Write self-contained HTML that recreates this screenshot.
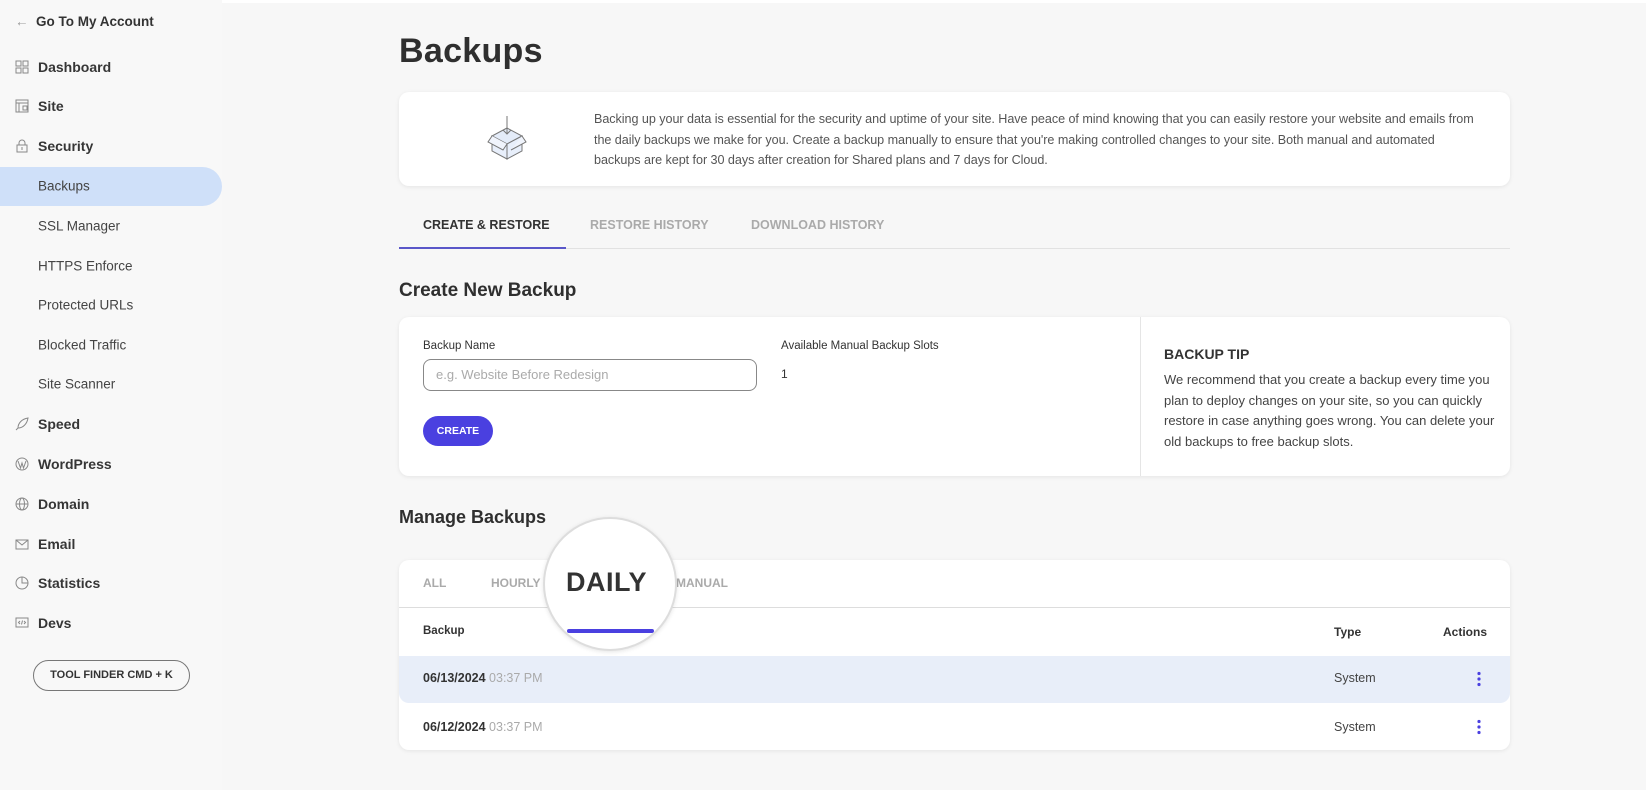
<!DOCTYPE html>
<html><head><meta charset="utf-8"><style>
*{margin:0;padding:0;box-sizing:border-box}
body{width:1646px;height:790px;background:#f7f7f7;font-family:"Liberation Sans",sans-serif;color:#333;position:relative;overflow:hidden}
.a{position:absolute;white-space:nowrap}
.side{position:absolute;left:0;top:0;width:222px;height:790px;background:#f8f8f8}
.ni{position:absolute;left:38px;font-size:14px;font-weight:bold;color:#363636;transform:translateY(-50%)}
.sub{position:absolute;left:38px;font-size:13.5px;color:#444;transform:translateY(-50%)}
.ic{position:absolute;left:15px;width:14px;height:14px;transform:translateY(-50%)}
.card{position:absolute;background:#fff;border-radius:10px;box-shadow:0 1px 4px rgba(0,0,0,.08)}
.g{font-size:13px;color:#555;line-height:20.5px}
</style></head><body>
<div class="side"></div>
<div class="a" style="left:15px;top:14px;font-size:13.5px;font-weight:bold;color:#333"><span style="color:#999;font-weight:normal">←</span>&nbsp; Go To My Account</div>
<svg class="ic" style="top:67px" viewBox="0 0 14 14" fill="none" stroke="#888"><rect x="1" y="1" width="5" height="5"/><rect x="8" y="1" width="5" height="5"/><rect x="1" y="8" width="5" height="5"/><rect x="8" y="8" width="5" height="5"/></svg>
<div class="ni" style="top:67px">Dashboard</div>
<svg class="ic" style="top:106px" viewBox="0 0 14 14" fill="none" stroke="#888"><rect x="1" y="1" width="12" height="12"/><path d="M1 4h12M4 4v9M8 7h4v4H8z"/></svg>
<div class="ni" style="top:106px">Site</div>
<svg class="ic" style="top:146px" viewBox="0 0 14 14" fill="none" stroke="#888"><rect x="2" y="6" width="10" height="7"/><path d="M4 6V4a3 3 0 0 1 6 0v2M7 8v3"/></svg>
<div class="ni" style="top:146px">Security</div>
<div class="a" style="left:0;top:167px;width:222px;height:39px;background:#cfe0f9;border-radius:0 20px 20px 0"></div>
<div class="sub" style="top:186px">Backups</div>
<div class="sub" style="top:226px">SSL Manager</div>
<div class="sub" style="top:266px">HTTPS Enforce</div>
<div class="sub" style="top:305px">Protected URLs</div>
<div class="sub" style="top:345px">Blocked Traffic</div>
<div class="sub" style="top:384px">Site Scanner</div>
<svg class="ic" style="top:424px" viewBox="0 0 14 14" fill="none" stroke="#888"><path d="M3 11c0-5 4-9 10-10-1 6-5 10-10 10zM3 11l-2 2"/></svg>
<div class="ni" style="top:424px">Speed</div>
<svg class="ic" style="top:464px" viewBox="0 0 14 14" fill="none" stroke="#888"><circle cx="7" cy="7" r="6"/><path d="M3 4l2.5 7L7 6l1.5 5L11 4"/></svg>
<div class="ni" style="top:464px">WordPress</div>
<svg class="ic" style="top:504px" viewBox="0 0 14 14" fill="none" stroke="#888"><circle cx="7" cy="7" r="6"/><ellipse cx="7" cy="7" rx="2.5" ry="6"/><path d="M1 7h12"/></svg>
<div class="ni" style="top:504px">Domain</div>
<svg class="ic" style="top:544px" viewBox="0 0 14 14" fill="none" stroke="#888"><rect x="1" y="3" width="12" height="9"/><path d="M1 3l6 5 6-5"/></svg>
<div class="ni" style="top:544px">Email</div>
<svg class="ic" style="top:583px" viewBox="0 0 14 14" fill="none" stroke="#888"><circle cx="7" cy="7" r="6"/><path d="M7 1v6h6"/></svg>
<div class="ni" style="top:583px">Statistics</div>
<svg class="ic" style="top:623px" viewBox="0 0 14 14" fill="none" stroke="#888"><rect x="1" y="2" width="12" height="9"/><path d="M5 5L3.5 6.5 5 8M9 5l1.5 1.5L9 8M7.5 4.5l-1 4"/></svg>
<div class="ni" style="top:623px">Devs</div>
<div class="a" style="left:33px;top:660px;width:157px;height:31px;border:1.5px solid #777;border-radius:16px;font-size:11px;font-weight:bold;color:#333;text-align:center;line-height:28px">TOOL FINDER CMD + K</div>

<div class="a" style="left:222px;top:0;width:1424px;height:3px;background:#fff"></div>
<div class="a" style="left:399px;top:32px;font-size:34px;font-weight:bold;color:#2f2f2f;letter-spacing:0.3px">Backups</div>

<div class="card" style="left:399px;top:92px;width:1111px;height:94px"></div>
<svg class="a" style="left:482px;top:114px" width="50" height="50" viewBox="0 0 50 50" fill="none" stroke="#777" stroke-width="1"><path d="M10 22l15-8 15 8-15 8z" fill="#e4ecf9"/><path d="M10 22v15l15 8V30zM40 22v15l-15 8V30z" fill="#e8effb"/><path d="M10 22l-4 6 15 8 4-6M40 22l4 6-15 8" fill="#f0f4fc"/><path d="M25 2v18M21 16l4 4 4-4"/></svg>
<div class="a g" style="left:594px;top:109px;font-size:12.6px;letter-spacing:-0.05px">Backing up your data is essential for the security and uptime of your site. Have peace of mind knowing that you can easily restore your website and emails from<br>the daily backups we make for you. Create a backup manually to ensure that you're making controlled changes to your site. Both manual and automated<br>backups are kept for 30 days after creation for Shared plans and 7 days for Cloud.</div>

<div class="a" style="left:423px;top:218px;font-size:12.5px;font-weight:bold;color:#333">CREATE &amp; RESTORE</div>
<div class="a" style="left:590px;top:218px;font-size:12.5px;font-weight:bold;color:#aaa">RESTORE HISTORY</div>
<div class="a" style="left:751px;top:218px;font-size:12.5px;font-weight:bold;color:#aaa">DOWNLOAD HISTORY</div>
<div class="a" style="left:399px;top:248px;width:1111px;height:1px;background:#e2e2e2"></div>
<div class="a" style="left:399px;top:247px;width:167px;height:2px;background:#5a57c9"></div>

<div class="a" style="left:399px;top:280px;font-size:19px;font-weight:bold;color:#2f2f2f">Create New Backup</div>
<div class="card" style="left:399px;top:317px;width:1111px;height:159px"></div>
<div class="a" style="left:1140px;top:317px;width:1px;height:159px;background:#e5e5e5"></div>
<div class="a" style="left:423px;top:340px;font-size:11.5px;color:#333">Backup Name</div>
<div class="a" style="left:423px;top:359px;width:334px;height:32px;border:1px solid #888;border-radius:8px;font-size:13px;color:#aaa;line-height:30px;padding-left:12px">e.g. Website Before Redesign</div>
<div class="a" style="left:781px;top:340px;font-size:11.5px;color:#333">Available Manual Backup Slots</div>
<div class="a" style="left:781px;top:367px;font-size:12px;color:#333">1</div>
<div class="a" style="left:423px;top:416px;width:70px;height:30px;background:#4a40e0;border-radius:15px;color:#fff;font-size:10.5px;font-weight:bold;text-align:center;line-height:30px">CREATE</div>
<div class="a" style="left:1164px;top:346px;font-size:14px;font-weight:bold;color:#333">BACKUP TIP</div>
<div class="a g" style="left:1164px;top:370px;line-height:20.7px;color:#444">We recommend that you create a backup every time you<br>plan to deploy changes on your site, so you can quickly<br>restore in case anything goes wrong. You can delete your<br>old backups to free backup slots.</div>

<div class="a" style="left:399px;top:507px;font-size:18px;font-weight:bold;color:#2f2f2f">Manage Backups</div>
<div class="card" style="left:399px;top:560px;width:1111px;height:190px"></div>
<div class="a" style="left:399px;top:607px;width:1111px;height:1px;background:#ddd"></div>
<div class="a" style="left:423px;top:576px;font-size:12px;font-weight:bold;color:#aaa">ALL</div>
<div class="a" style="left:491px;top:576px;font-size:12px;font-weight:bold;color:#aaa">HOURLY</div>
<div class="a" style="left:676px;top:576px;font-size:12px;font-weight:bold;color:#aaa">MANUAL</div>
<div class="a" style="left:423px;top:625px;font-size:11.5px;font-weight:bold;color:#333">Backup</div>
<div class="a" style="left:1334px;top:625px;font-size:12px;font-weight:bold;color:#333">Type</div>
<div class="a" style="left:1443px;top:625px;font-size:12px;font-weight:bold;color:#333">Actions</div>
<div class="a" style="left:399px;top:656px;width:1111px;height:47px;background:#e8eef9;border-radius:0 0 10px 10px"></div>
<div class="a" style="left:423px;top:671px;font-size:12.5px;color:#333"><b>06/13/2024</b> <span style="color:#aaa">03:37 PM</span></div>
<div class="a" style="left:1334px;top:671px;font-size:12.5px;color:#444">System</div>
<div class="a" style="left:423px;top:720px;font-size:12.5px;color:#333"><b>06/12/2024</b> <span style="color:#aaa">03:37 PM</span></div>
<div class="a" style="left:1334px;top:720px;font-size:12.5px;color:#444">System</div>
<svg class="a" style="left:1476px;top:671px" width="6" height="16"><circle cx="3" cy="2.5" r="1.6" fill="#4a40e0"/><circle cx="3" cy="8" r="1.6" fill="#4a40e0"/><circle cx="3" cy="13.5" r="1.6" fill="#4a40e0"/></svg>
<svg class="a" style="left:1476px;top:719px" width="6" height="16"><circle cx="3" cy="2.5" r="1.6" fill="#4a40e0"/><circle cx="3" cy="8" r="1.6" fill="#4a40e0"/><circle cx="3" cy="13.5" r="1.6" fill="#4a40e0"/></svg>

<div class="a" style="left:543px;top:517px;width:134px;height:134px;border-radius:50%;background:#fff;border:2px solid #ddd;box-shadow:0 1px 4px rgba(0,0,0,.1);overflow:hidden">
<div class="a" style="left:21px;top:48px;font-size:27px;font-weight:bold;color:#333;letter-spacing:0.5px">DAILY</div>
<div class="a" style="left:22px;top:110px;width:87px;height:4px;background:#4a40e0;border-radius:2px"></div>
</div>
</body></html>
